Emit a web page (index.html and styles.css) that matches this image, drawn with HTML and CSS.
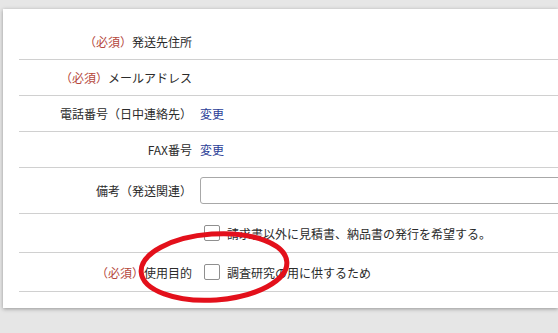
FILE: index.html
```html
<!DOCTYPE html>
<html lang="ja">
<head>
  <meta charset="UTF-8">
  <meta name="viewport" content="width=device-width,initial-scale=1.0">
  <title>申込フォーム</title>
  <link rel="stylesheet" href="styles.css">
</head>
<body>
  <div class="card">
    <div class="row">
      <div class="label"><span class="req">（必須）</span>発送先住所</div>
      <div class="value"></div>
    </div>
    <div class="row">
      <div class="label"><span class="req">（必須）</span>メールアドレス</div>
      <div class="value"></div>
    </div>
    <div class="row">
      <div class="label">電話番号（日中連絡先）</div>
      <div class="value"><a class="change" href="#">変更</a></div>
    </div>
    <div class="row">
      <div class="label">FAX番号</div>
      <div class="value"><a class="change" href="#">変更</a></div>
    </div>
    <div class="row note">
      <div class="label">備考（発送関連）</div>
      <div class="value"><input type="text" class="text-input"></div>
    </div>
    <div class="row check">
      <div class="label"></div>
      <div class="value"><label class="opt"><span class="box"></span>請求書以外に見積書、納品書の発行を希望する。</label></div>
    </div>
    <div class="row check">
      <div class="label"><span class="req">（必須）</span>使用目的</div>
      <div class="value"><label class="opt"><span class="box"></span>調査研究の用に供するため</label></div>
    </div>
  </div>

  <!-- 赤丸の注記 -->
  <svg class="mark" width="160" height="80" viewBox="0 0 160 80">
    <ellipse cx="80" cy="38" rx="73" ry="33" transform="rotate(-4 80 38)" fill="none" stroke="#e3101b" stroke-width="5"/>
  </svg>
</body>
</html>
```

FILE: styles.css
```css
body {
  margin: 0;
  background: #e6e6e6;
  font-family: "Noto Sans CJK JP", "Noto Sans", sans-serif;
  font-size: 12px;
  color: #2b2b2b;
  overflow: hidden;
  height: 333px;
  position: relative;
}
.card {
  margin: 9px 0 0 3px;
  padding: 15px 0 16px 16px;
  background: #fff;
  box-shadow: 0 1px 4px rgba(0,0,0,0.35);
  overflow: hidden;
}
.row {
  display: flex;
  align-items: center;
  height: 35px;
  border-bottom: 1px solid #d0d0d0;
  margin-right: -20px;
}
.row.note {
  height: 45px;
}
.row.check {
  height: 38px;
}
.label {
  width: 173px;
  text-align: right;
  flex-shrink: 0;
}
.req {
  color: #b5473c;
}
.value {
  margin-left: 8px;
  flex: 1;
  display: flex;
  align-items: center;
}
.change {
  color: #2b3d97;
  text-decoration: none;
}
.text-input {
  width: 100%;
  height: 27px;
  box-sizing: border-box;
  border: 1px solid #a8a8a8;
  border-radius: 3px;
  margin: 0;
}
.opt {
  display: flex;
  align-items: center;
  margin-left: 4px;
}
.box {
  width: 14px;
  height: 14px;
  border: 1px solid #8f8f8f;
  border-radius: 2px;
  margin-right: 7px;
  background: #fff;
}
.mark {
  position: absolute;
  left: 134px;
  top: 229px;
}
```
